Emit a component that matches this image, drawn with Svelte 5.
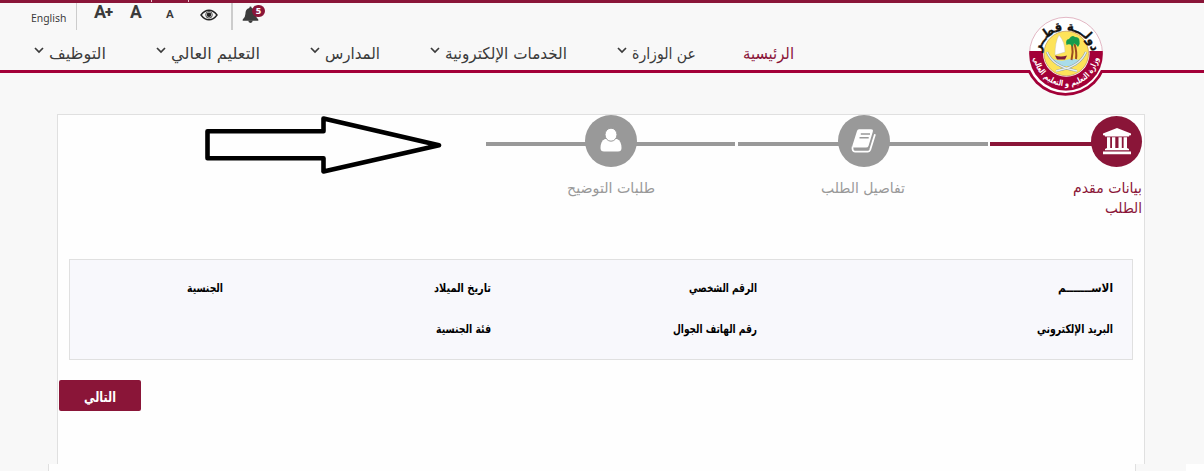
<script>
  const nav = [
    { text: 'الرئيسية', w: 51, active: true },
    { text: 'عن الوزارة', w: 64 },
    { text: 'الخدمات الإلكترونية', w: 122 },
    { text: 'المدارس', w: 55 },
    { text: 'التعليم العالي', w: 89 },
    { text: 'التوظيف', w: 57 }
  ];
  const steps = [
    { icon: 'bank', active: true, lines: [['بيانات مقدم', 69], ['الطلب', 37]] },
    { icon: 'book', lines: [['تفاصيل الطلب', 84]] },
    { icon: 'user', lines: [['طلبات التوضيح', 88]] }
  ];
  const fields = [
    [['الاســـــــم', 55], ['الرقم الشخصي', 68], ['تاريخ الميلاد', 57], ['الجنسية', 36]],
    [['البريد الإلكتروني', 76], ['رقم الهاتف الجوال', 84], ['فئة الجنسية', 55]]
  ];
</script>

{#snippet label(text, w, size, bold)}
  <svg class="label" width={w} height={size * 2} class:bold>
    <text x={w} y={size * 1.25} font-size={size} textLength={w} lengthAdjust="spacingAndGlyphs">{text}</text>
  </svg>
{/snippet}

<div class="page">
  <header>
    <div class="strip"><i></i><i></i></div>
    <div class="tools">
      <span class="lang">English</span>
      <span class="rule"></span>
      <span class="size big">A<b>+</b></span>
      <span class="size mid">A</span>
      <span class="size small">A</span>
      <svg class="eye" width="18" height="12" viewBox="0 0 18 12">
        <path d="M1 6Q4.500 1.200 9 1.200T17 6Q13.500 10.800 9 10.800T1 6Z" fill="none" stroke="#222" stroke-width="1.400" />
        <circle cx="9" cy="5.800" r="3.300" fill="none" stroke="#222" stroke-width=".8" />
        <circle cx="9" cy="5.800" r="2.300" fill="#222" />
      </svg>
      <span class="rule wide"></span>
      <div class="bell">
        <svg width="17" height="18" viewBox="0 0 17 18">
          <path d="M8.500 0.500Q9.700.5 9.600 2C12.500 2.700 13.500 4.800 13.600 8Q13.700 11.500 16.300 13.500V14.800H.7V13.500Q3.300 11.500 3.400 8C3.500 4.800 4.500 2.700 7.400 2Q7.300.5 8.500.5Z" fill="#3b3b3b" />
          <path d="M6.300 14.500H10.700A2.200 2.400 0 0 1 6.300 14.500Z" fill="#3b3b3b" />
        </svg>
        <span class="badge">5</span>
      </div>
    </div>
    <nav>
      {#each nav as item}
        <div class="item" class:active={item.active}>
          {@render label(item.text, item.w, 16, false)}
          {#if !item.active}
            <svg class="chev" width="10" height="7" viewBox="0 0 10 7"><path d="M1 1L5 5L9 1" fill="none" stroke="#3b3b3b" stroke-width="1.700" /></svg>
          {/if}
        </div>
      {/each}
    </nav>
    <svg class="logo" width="90" height="90" viewBox="1021 10 90 90">
      <defs>
        <clipPath id="below"><rect x="1021" y="70" width="90" height="30" /></clipPath>
        <clipPath id="lower"><rect x="1021" y="51" width="90" height="50" /></clipPath>
        <path id="topArc" d="M1040.400 61A26 26 0 1 1 1091.600 61" />
        <path id="bottomArc" d="M1033.600 50A32.600 32.600 0 1 0 1098.400 50" />
      </defs>
      <g clip-path="url(#below)">
        <circle cx="1065.500" cy="54" r="41.700" fill="#a30038" />
        <circle cx="1065.500" cy="54" r="38.900" fill="#fff" />
      </g>
      <circle cx="1066" cy="53.800" r="36.500" fill="#fff" stroke="#d79aac" stroke-width=".7" />
      <circle cx="1066" cy="53.800" r="36.800" fill="#a30038" clip-path="url(#lower)" />
      <circle cx="1066.300" cy="53.500" r="23.300" fill="#fff" />
      <circle cx="1066.300" cy="53.500" r="22.300" fill="#fde35a" stroke="#b5843f" stroke-width=".6" />
      <path d="M1053 59Q1061 62 1066 60T1080 60L1076 66H1057Z" fill="#a9dcea" />
      <path d="M1055 55.500Q1061 57.500 1067 55.500L1065 59.500H1057Z" fill="#7c1b3c" />
      <path d="M1059 35Q1065 42 1065 52L1055 55Q1055 42 1059 35Z" fill="#fff" stroke="#bbb" stroke-width=".4" />
      <path d="M1072 44Q1073.500 52 1071.500 60M1074.500 44Q1077 52 1076 59" fill="none" stroke="#9b4c20" stroke-width="2" />
      <path d="M1066.500 45Q1065 39.500 1069 39Q1072 34 1075 37Q1079.500 37 1079.500 41Q1080.500 44 1078 47Q1076 43.500 1074 43.500L1072.500 47L1070.500 44.500Q1068 44 1066.500 45Z" fill="#179b4c" />
      <path d="M1047 52Q1053 66 1073 70L1077 71M1086 52Q1080 66 1060 70L1056 71" fill="none" stroke="#8c9ca0" stroke-width="2.300" />
      <path d="M1047 52Q1053 66 1073 70L1077 71M1086 52Q1080 66 1060 70L1056 71" fill="none" stroke="#e7eff0" stroke-width="1.300" />
      <text class="arcText" font-size="12.500" font-weight="700" fill="#111" stroke="#111" stroke-width=".4"><textPath href="#topArc" startOffset="50%" text-anchor="middle" textLength="72" lengthAdjust="spacingAndGlyphs">دولـــة قطــر</textPath></text>
      <text class="arcText" font-size="8" font-weight="700" fill="#fff"><textPath href="#bottomArc" startOffset="50%" text-anchor="middle" textLength="94" lengthAdjust="spacingAndGlyphs">وزارة التعليم و التعليم العالي</textPath></text>
    </svg>
  </header>

  <main>
    <div class="steps">
      {#each steps as step}
        <div class="step {step.icon}" class:active={step.active}>
          <div class="track">
            <div class="disc">
              {#if step.icon === 'bank'}
                <svg width="28" height="27" viewBox="0 0 28 27" fill="#fff">
                  <path d="M14 0L28 5.500V7.200H26.500L26 8.500H2L1.500 7.200H0V5.500ZM4 9.200H7.200V20H9V9.200H12.300V20H15.500V9.200H18.800V20H20.600V9.200H24V20L26 21V22.200H2V21L4 20ZM0 23.500H28V26.200H0Z" />
                </svg>
              {:else if step.icon === 'book'}
                <svg width="26" height="26" viewBox="0 0 26 26">
                  <path d="M8 1.300H20Q22.500 1.300 21.800 3.700L17.500 18Q17 19.500 15 19.500H3Q.8 19.500 1.500 17.300L6 3Q6.500 1.300 8 1.300Z" fill="#fff" />
                  <path d="M1.600 18.500Q1 23.600 4 23.600H17Q18.600 23.600 19.200 21.800L24 6.200" fill="none" stroke="#fff" stroke-width="1.800" />
                  <path d="M9.800 6H19M8.500 9.800H17.700" stroke="#999" stroke-width="1.400" />
                </svg>
              {:else}
                <svg width="22" height="25" viewBox="0 0 22 25">
                  <path d="M5 11H17Q21.500 13 21.500 20Q21.500 23.500 18 23.500H4Q.5 23.500 .5 20Q.5 13 5 11Z" fill="#fff" />
                  <ellipse cx="11" cy="6.700" rx="6" ry="6.500" fill="#fff" stroke="#999" stroke-width="1" />
                </svg>
              {/if}
            </div>
          </div>
          <div class="caption">
            {#each step.lines as [text, w]}
              <div class="line">{@render label(text, w, 14.500, false)}</div>
            {/each}
          </div>
        </div>
      {/each}
    </div>

    <section class="panel">
      {#each fields as row}
        <div class="row">
          {#each row as [text, w]}
            <div class="cell">{@render label(text, w, 12, true)}</div>
          {/each}
        </div>
      {/each}
    </section>

    <button>{@render label('التالي', 32, 14, true)}</button>
  </main>

  <footer><div class="sheet"></div><div class="edge"></div></footer>

  <svg class="arrow" width="242" height="62" viewBox="202 114 242 62">
    <path d="M207.500 131.300H323.500V118.500L439 145.200L323.500 171.500V158.200H207.500Z" fill="none" stroke="#000" stroke-width="4.600" stroke-linejoin="round" />
  </svg>
</div>

<style>
  :global(body) { margin: 0; }
  .page {
    position: relative; width: 1204px; height: 471px; overflow: hidden;
    background: #f8f8f8; color: #3b3b3b; direction: rtl;
    font-family: "DejaVu Sans", sans-serif;
    display: flex; flex-direction: column;
  }
  .label { display: block; flex: none; overflow: visible; fill: currentColor; font-family: "DejaVu Sans", sans-serif; direction: rtl; }
  .bold { font-weight: 700; }
  header { height: 70px; border-bottom: 3px solid #a30038; position: relative; flex: none; }
  .strip { height: 3px; background: #8a1538; direction: ltr; display: flex; gap: 36px; padding-left: 151px; }
  .strip i { width: 1px; height: 2px; background: #e5c5cf; }
  .tools { direction: ltr; height: 27px; display: flex; align-items: flex-start; padding-left: 31px; font-family: "Noto Sans", sans-serif; }
  .lang { width: 45px; font-size: 10.400px; line-height: 15px; padding-top: 8px; height: 15px; }
  .rule { width: 1px; height: 27px; background: #ccc; margin-right: 17px; }
  .rule.wide { width: 2px; margin: 0 9px 0 13px; }
  .size { font-family: Roboto, sans-serif; font-weight: 700; line-height: 18px; }
  .size b { font-size: 15px; font-weight: 900; vertical-align: 1px; line-height: 1px; margin-left: -1px; }
  .big { font-size: 18px; width: 36px; }
  .mid { font-size: 17.500px; width: 36px; }
  .small { font-size: 11.500px; width: 34px; padding-top: 2px; }
  .eye { margin-top: 6px; }
  .bell { position: relative; padding-top: 3px; }
  .bell svg { display: block; }
  .badge {
    position: absolute; left: 10px; top: 2px; width: 13px; height: 12px; border-radius: 6px;
    background: #8a1538; color: #fff; font-size: 9.500px; font-weight: 700; line-height: 12px; text-align: center;
  }
  nav { display: flex; gap: 50px; padding: 9px 410px 0 0; }
  .item { display: flex; gap: 5px; }
  .item.active { color: #8a1538; margin-left: -3px; }
  .chev { margin-top: 8px; }
  .logo { position: absolute; left: 1021px; top: 10px; }
  .arcText { font-family: "DejaVu Sans", sans-serif; direction: rtl; }
  main { box-sizing: border-box; width: 1088px; height: 350px; margin: 41px 59px 0 0; border: 1px solid #e0e0e0; border-bottom: 0; background: #fefefe; flex: none; }
  .steps { display: flex; gap: 2px; height: 144px; padding-right: 2px; }
  .step { width: 250px; color: #999; }
  .step.active { width: 152px; color: #8a1538; }
  .step.user { width: 249px; margin-right: 1px; }
  .track {
    height: 52px; display: flex; justify-content: center;
    background: linear-gradient(currentColor, currentColor) 0 27px / 100% 4px no-repeat;
  }
  .book .track { padding-left: 2px; }
  .user .track { padding-left: 1px; }
  .active .track { justify-content: flex-start; background-size: 130px 4px; }
  .disc { width: 52px; height: 52px; border-radius: 50%; background: currentColor; display: flex; align-items: center; justify-content: center; }
  .active .disc { width: 51px; height: 51px; margin-top: 1px; }
  .user .disc svg { margin-bottom: 1px; }
  .caption { padding-top: 8px; display: flex; flex-direction: column; align-items: center; }
  .active .caption { align-items: flex-start; }
  .line { height: 20px; }
  .panel { box-sizing: border-box; width: 1064px; height: 101px; margin-right: 11px; border: 1px solid #e0e0e0; background: #f8f8fc; padding: 17px 19px 0 0; color: #000; }
  .row { display: grid; grid-template-columns: 356px 266px 268px 1fr; height: 41px; }
  button { display: flex; justify-content: center; width: 82px; height: 31px; margin: 20px 1003px 0 0; padding: 4px 0 0; border: 0; border-radius: 2px; background: #8a1538; color: #fff; }
  footer { direction: ltr; display: flex; justify-content: space-between; height: 7px; padding-left: 48px; }
  .sheet { width: 1086px; border: solid #e0e0e0; border-width: 0 1px; background: #fefefe; }
  .edge { width: 18px; background: #fff; }
  .arrow { position: absolute; left: 202px; top: 114px; }
</style>
